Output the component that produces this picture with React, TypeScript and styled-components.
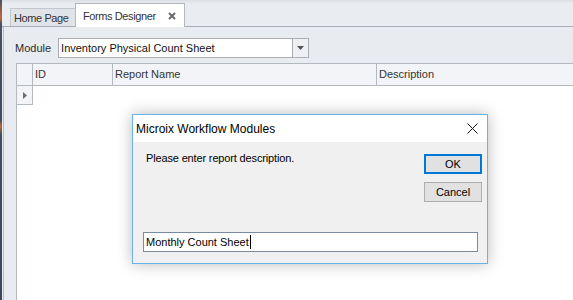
import styled, { createGlobalStyle } from 'styled-components';

const GlobalStyle = createGlobalStyle`
  html, body {
    margin: 0;
    padding: 0;
    width: 100%;
    height: 100%;
    overflow: hidden;
  }
  body {
    font-family: 'Liberation Sans', Arial, sans-serif;
    font-size: 11px;
    color: #1e1e1e;
  }
`;

const Screen = styled.div`
  position: relative;
  display: flex;
  width: 573px;
  height: 300px;
  background: #e9ecf0;
`;

const OtherWindow = styled.div`
  width: 2px;
  flex: none;
  background: linear-gradient(180deg, #4a5262 0%, #c06a3a 6%, #4a5262 8%, #3f4b5e 40%, #b86a3a 42%, #404c60 45%, #3c475a 100%);
`;

const Workspace = styled.div`
  flex: 1;
  display: flex;
  flex-direction: column;
  min-width: 0;
`;

const TabStrip = styled.div`
  height: 27px;
  flex: none;
  display: flex;
  align-items: flex-end;
  padding-left: 8px;
  background: linear-gradient(180deg, #dcdfe3 0px, #e9ecf0 4px);
  border-bottom: 1px solid #a8adb5;
  box-sizing: border-box;
`;

const Tab = styled.div<{ $active?: boolean }>`
  display: flex;
  align-items: center;
  justify-content: space-between;
  box-sizing: border-box;
  width: ${(p) => (p.$active ? '110px' : '65px')};
  height: ${(p) => (p.$active ? '24px' : '18px')};
  padding: ${(p) => (p.$active ? '0 8px 0 7px' : '0 0 0 3px')};
  margin-bottom: ${(p) => (p.$active ? '-1px' : '0')};
  background: ${(p) => (p.$active ? '#ffffff' : '#e0e3e8')};
  border: 1px solid ${(p) => (p.$active ? '#b3b8c0' : '#c3c7ce')};
  border-bottom: none;
  border-right: ${(p) => (p.$active ? '1px solid #b3b8c0' : 'none')};
  font-size: 11px;
  letter-spacing: -0.4px;
  color: #333;
`;

const CloseGlyph = styled.svg`
  width: 8px;
  height: 8px;
  display: block;
`;

const Panel = styled.div`
  flex: 1;
  display: flex;
  flex-direction: column;
  margin-left: 1px;
  border-left: 1px solid #b9bec6;
  background: #e8ebf0;
  padding: 11px 0 0 11px;
  min-height: 0;
`;

const ModuleRow = styled.div`
  display: flex;
  align-items: center;
  gap: 7px;
  height: 20px;
`;

const Label = styled.span`
  font-size: 11px;
  color: #2b2b2b;
`;

const Combo = styled.div`
  width: 251px;
  height: 20px;
  box-sizing: border-box;
  display: flex;
  background: #ffffff;
  border: 1px solid #abadb3;
`;

const ComboText = styled.div`
  flex: 1;
  padding-left: 2px;
  line-height: 18px;
  font-size: 11px;
  color: #111;
  white-space: nowrap;
  overflow: hidden;
`;

const ComboButton = styled.div`
  width: 15px;
  border-left: 1px solid #abadb3;
  background: #eef0f3;
  display: flex;
  align-items: center;
  justify-content: center;
`;

const Grid = styled.div`
  margin-top: 5px;
  margin-left: 1px;
  flex: 1;
  display: flex;
  flex-direction: column;
  background: #ffffff;
  border-left: 1px solid #b4b9c0;
  border-top: 1px solid #b4b9c0;
`;

const HeaderRow = styled.div`
  display: grid;
  grid-template-columns: 16px 80px 264px 1fr;
  height: 21px;
  background: #f3f4f7;
  border-bottom: 1px solid #b4b9c0;
`;

const HeaderCell = styled.div<{ $last?: boolean }>`
  border-right: ${(p) => (p.$last ? 'none' : '1px solid #b4b9c0')};
  padding-left: 2px;
  line-height: 20px;
  font-size: 11px;
  color: #333;
`;

const DataRow = styled.div`
  display: grid;
  grid-template-columns: 16px 1fr;
  height: 19px;
`;

const Indicator = styled.div`
  background: #f3f4f7;
  border-right: 1px solid #b4b9c0;
  border-bottom: 1px solid #b4b9c0;
  display: flex;
  align-items: center;
  justify-content: center;
`;

const Dialog = styled.div`
  position: absolute;
  left: 132px;
  top: 114px;
  width: 356px;
  height: 150px;
  box-sizing: border-box;
  border: 1px solid #66b3ee;
  background: #f0f0f0;
  display: flex;
  flex-direction: column;
  box-shadow: 0 0 14px rgba(0, 0, 0, 0.28);
`;

const TitleBar = styled.div`
  height: 27px;
  flex: none;
  display: flex;
  align-items: center;
  justify-content: space-between;
  padding: 0 9px 0 3px;
  background: #ffffff;
  font-size: 12px;
  color: #000;
`;

const DialogBody = styled.div`
  flex: 1;
  display: grid;
  grid-template-columns: 1fr 58px;
  grid-template-rows: auto 1fr auto;
  column-gap: 10px;
  padding: 9px 5px 11px 10px;
`;

const Message = styled.div`
  padding: 0 0 0 3px;
  font-size: 11px;
  letter-spacing: -0.15px;
  color: #000;
  line-height: 14px;
`;

const Buttons = styled.div`
  grid-row: 1 / span 2;
  grid-column: 2;
  display: flex;
  flex-direction: column;
  gap: 8px;
  padding-top: 3px;
`;

const Button = styled.div<{ $default?: boolean }>`
  height: 20px;
  box-sizing: border-box;
  display: flex;
  align-items: center;
  justify-content: center;
  background: #e1e1e1;
  border: ${(p) => (p.$default ? '2px solid #0078d7' : '1px solid #adadad')};
  font-size: 11px;
  color: #000;
`;

const Input = styled.div`
  grid-column: 1 / span 2;
  grid-row: 3;
  margin-right: 4px;
  height: 20px;
  box-sizing: border-box;
  display: flex;
  align-items: center;
  padding-left: 2px;
  background: #ffffff;
  border: 1px solid #7a8ba0;
  font-size: 11px;
  color: #000;
`;

const Caret = styled.span`
  display: inline-block;
  width: 1px;
  height: 14px;
  background: #000;
  margin-left: 1px;
`;

export default function App() {
  return (
    <>
      <GlobalStyle />
      <Screen>
        <OtherWindow />
        <Workspace>
          <TabStrip>
            <Tab>Home Page</Tab>
            <Tab $active>
              Forms Designer
              <CloseGlyph viewBox="0 0 8 8">
                <path d="M1 1 L7 7 M7 1 L1 7" stroke="#6a6a6a" strokeWidth="2" />
              </CloseGlyph>
            </Tab>
          </TabStrip>
          <Panel>
            <ModuleRow>
              <Label>Module</Label>
              <Combo>
                <ComboText>Inventory Physical Count Sheet</ComboText>
                <ComboButton>
                  <svg width="7" height="4" viewBox="0 0 7 4">
                    <path d="M0 0 H7 L3.5 4 Z" fill="#555" />
                  </svg>
                </ComboButton>
              </Combo>
            </ModuleRow>
            <Grid>
              <HeaderRow>
                <HeaderCell />
                <HeaderCell>ID</HeaderCell>
                <HeaderCell>Report Name</HeaderCell>
                <HeaderCell $last>Description</HeaderCell>
              </HeaderRow>
              <DataRow>
                <Indicator>
                  <svg width="4" height="7" viewBox="0 0 4 7">
                    <path d="M0 0 L4 3.5 L0 7 Z" fill="#6d6d6d" />
                  </svg>
                </Indicator>
                <div />
              </DataRow>
            </Grid>
          </Panel>
        </Workspace>
        <Dialog>
          <TitleBar>
            <span>Microix Workflow Modules</span>
            <svg width="11" height="11" viewBox="0 0 11 11">
              <path d="M0.5 0.5 L10.5 10.5 M10.5 0.5 L0.5 10.5" stroke="#111" strokeWidth="1" />
            </svg>
          </TitleBar>
          <DialogBody>
            <Message>Please enter report description.</Message>
            <Buttons>
              <Button $default>OK</Button>
              <Button>Cancel</Button>
            </Buttons>
            <Input>
              Monthly Count Sheet
              <Caret />
            </Input>
          </DialogBody>
        </Dialog>
      </Screen>
    </>
  );
}
